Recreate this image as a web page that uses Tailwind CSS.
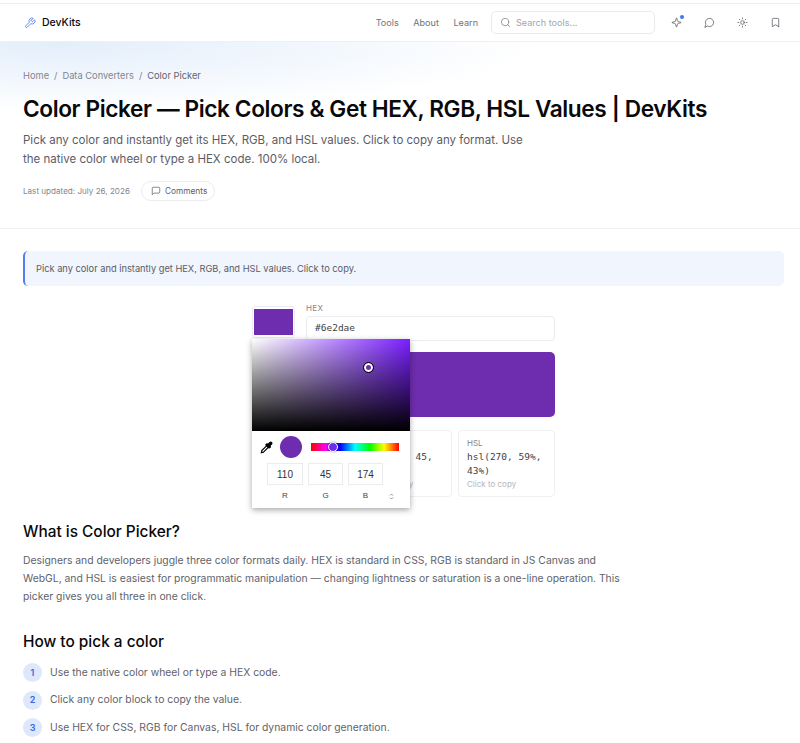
<!doctype html>
<html lang="en">
  <head>
    <meta charset="UTF-8" />
    <meta name="viewport" content="width=device-width, initial-scale=1.0" />
    <title>Color Picker | DevKits</title>
    <script src="https://cdn.jsdelivr.net/npm/@tailwindcss/browser@4"></script>
  </head>

  <body class="h-[743px] overflow-hidden bg-white font-['Inter',sans-serif] text-[#09090b]">
    <div class="h-[4px] border-b border-[#ececee] bg-white"></div>

    <!-- nav -->
    <header class="flex h-[38px] items-center border-b border-[#f0f0f2] bg-white pl-[24px] pr-[19px]">
      <div class="flex items-center gap-[6px]">
        <svg class="h-[12px] w-[12px] text-[#5b7de8]" viewBox="0 0 24 24" fill="none" stroke="currentColor" stroke-width="1.75" stroke-linecap="round" stroke-linejoin="round"><path d="M14.7 6.3a1 1 0 0 0 0 1.4l1.6 1.6a1 1 0 0 0 1.4 0l3.77-3.77a6 6 0 0 1-7.94 7.94l-6.91 6.91a2.12 2.12 0 0 1-3-3l6.91-6.91a6 6 0 0 1 7.94-7.94l-3.76 3.76z"/></svg>
        <span class="text-[10.5px] font-medium">DevKits</span>
      </div>
      <nav class="ml-auto flex items-center gap-[14.5px] text-[9.1px] text-[#71717a]">
        <span>Tools</span>
        <span>About</span>
        <span>Learn</span>
      </nav>
      <div class="ml-[13px] flex h-[23px] w-[164px] items-center gap-[5px] rounded-[5px] border border-[#ebebee] pl-[8px] text-[9.1px] text-[#a4a4ad]">
        <svg class="h-[11px] w-[11px] text-[#85858e]" viewBox="0 0 24 24" fill="none" stroke="currentColor" stroke-width="1.75" stroke-linecap="round" stroke-linejoin="round"><circle cx="11" cy="11" r="8"/><path d="m21 21-4.3-4.3"/></svg>
        <span>Search tools...</span>
      </div>
      <div class="ml-[16px] flex items-center gap-[22px] text-[#63636c]">
        <div class="relative">
          <svg class="h-[11px] w-[11px]" viewBox="0 0 24 24" fill="none" stroke="currentColor" stroke-width="1.75" stroke-linecap="round" stroke-linejoin="round"><path d="M9.94 15.5A2 2 0 0 0 8.5 14.06l-6.14-1.58a.5.5 0 0 1 0-.96L8.5 9.94A2 2 0 0 0 9.94 8.5l1.58-6.14a.5.5 0 0 1 .96 0L14.06 8.5A2 2 0 0 0 15.5 9.94l6.14 1.58a.5.5 0 0 1 0 .96L15.5 14.06a2 2 0 0 0-1.44 1.44l-1.58 6.14a.5.5 0 0 1-.96 0z"/></svg>
          <span class="absolute right-[-2px] top-[-2px] h-[4px] w-[4px] rounded-full bg-[#3b78f2]"></span>
        </div>
        <svg class="h-[11px] w-[11px]" viewBox="0 0 24 24" fill="none" stroke="currentColor" stroke-width="1.75" stroke-linecap="round" stroke-linejoin="round"><path d="M7.9 20A9 9 0 1 0 4 16.1L2 22Z"/></svg>
        <svg class="h-[11px] w-[11px]" viewBox="0 0 24 24" fill="none" stroke="currentColor" stroke-width="1.75" stroke-linecap="round" stroke-linejoin="round"><circle cx="12" cy="12" r="4"/><path d="M12 2v2M12 20v2M4.93 4.93l1.41 1.41M17.66 17.66l1.41 1.41M2 12h2M20 12h2M6.34 17.66l-1.41 1.41M19.07 4.93l-1.41 1.41"/></svg>
        <svg class="h-[11px] w-[11px]" viewBox="0 0 24 24" fill="none" stroke="currentColor" stroke-width="1.75" stroke-linecap="round" stroke-linejoin="round"><path d="m19 21-7-4-7 4V5a2 2 0 0 1 2-2h10a2 2 0 0 1 2 2v16z"/></svg>
      </div>
    </header>

    <!-- hero -->
    <section class="h-[187px] border-b border-[#f0f0f2] bg-[radial-gradient(ellipse_480px_70px_at_60px_0px,#e3eefb,#ffffff)] px-[23px] pt-[28px]">
      <div class="flex items-center gap-[5px] text-[9.3px] leading-[12px] text-[#85858e]">
        <span>Home</span><span>/</span><span>Data Converters</span><span>/</span><span class="text-[#63636c]">Color Picker</span>
      </div>
      <h1 class="mt-[12px] text-[22.67px] font-semibold leading-[30px] tracking-[-0.4px]">Color Picker — Pick Colors &amp; Get HEX, RGB, HSL Values | DevKits</h1>
      <p class="mt-[7px] w-[520px] text-[11.5px] leading-[18.5px] text-[#5c5c66]">Pick any color and instantly get its HEX, RGB, and HSL values. Click to copy any format. Use the native color wheel or type a HEX code. 100% local.</p>
      <div class="mt-[13px] flex items-center gap-[11px]">
        <span class="text-[8.1px] text-[#85858e]">Last updated: July 26, 2026</span>
        <span class="flex h-[20px] w-[74px] items-center gap-[4px] rounded-full border border-[#ececef] pl-[9px] text-[8.3px] text-[#5c5c66]">
          <svg class="h-[10px] w-[10px]" viewBox="0 0 24 24" fill="none" stroke="currentColor" stroke-width="1.75" stroke-linecap="round" stroke-linejoin="round"><path d="M21 15a2 2 0 0 1-2 2H7l-4 4V5a2 2 0 0 1 2-2h14a2 2 0 0 1 2 2z"/></svg>
          Comments
        </span>
      </div>
    </section>

    <main class="pl-[23px] pr-[16px] pt-[22px]">
      <div class="flex h-[35px] items-center rounded-[5px] border-l-2 border-[#4f7ff0] bg-[#f0f5fe] pl-[11px] text-[9.28px] text-[#5c5c66]">Pick any color and instantly get HEX, RGB, and HSL values. Click to copy.</div>

      <!-- tool -->
      <div class="relative mx-auto mt-[17px] h-[199px] w-[303px]">
        <div class="flex gap-[11px]">
          <div class="mt-[3px] h-[32px] w-[43px] rounded-[3px] border border-[#ececef] px-[1px] py-[2px]">
            <div class="h-full w-full bg-[#6e2dae]"></div>
          </div>
          <div class="flex-1">
            <div class="text-[8px] leading-[10px] tracking-[0.4px] text-[#85858e]">HEX</div>
            <div class="mt-[3px] flex h-[25px] items-center rounded-[4px] border border-[#ececef] pl-[8px] font-['DejaVu_Sans_Mono',monospace] text-[9.5px] text-[#3f3f46]">#6e2dae</div>
          </div>
        </div>
        <div class="mt-[11px] h-[65px] rounded-[5px] bg-[#6e2dae]"></div>
        <div class="mt-[13px] grid grid-cols-3 gap-[6px]">
          <div class="h-[67px] rounded-[4px] border border-[#f0f0f2]"></div>
          <div class="h-[67px] rounded-[4px] border border-[#f0f0f2] px-[8px] pt-[6px]">
            <div class="text-[8px] leading-[12px] text-[#85858e]">RGB</div>
            <div class="mt-[1px] font-['DejaVu_Sans_Mono',monospace] text-[9.5px] leading-[14px] text-[#3f3f46]">rgb(110, 45, 174)</div>
            <div class="text-[8px] leading-[12px] text-[#b4b4bb]">Click to copy</div>
          </div>
          <div class="h-[67px] rounded-[4px] border border-[#f0f0f2] px-[8px] pt-[6px]">
            <div class="text-[8px] leading-[12px] text-[#85858e]">HSL</div>
            <div class="mt-[1px] font-['DejaVu_Sans_Mono',monospace] text-[9.5px] leading-[14px] text-[#3f3f46]">hsl(270, 59%, 43%)</div>
            <div class="text-[8px] leading-[12px] text-[#b4b4bb]">Click to copy</div>
          </div>
        </div>

        <!-- color popup -->
        <div class="absolute left-0 top-[36px] h-[169px] w-[158px] bg-white font-['Liberation_Sans',sans-serif] shadow-[0_2px_6px_rgba(0,0,0,0.35)]">
          <div class="relative h-[92px] bg-[linear-gradient(to_top,#000,transparent),linear-gradient(to_right,#fff,#7a1fff)]">
            <span class="absolute left-[112px] top-[24px] h-[9px] w-[9px] rounded-full border-2 border-white bg-[#6e2dae] outline outline-1 outline-black"></span>
          </div>
          <div class="flex h-[32px] items-center pl-[8px]">
            <svg class="h-[13px] w-[13px] text-black" viewBox="0 0 24 24" fill="none" stroke="currentColor" stroke-width="2" stroke-linecap="round" stroke-linejoin="round"><path d="m2 22 1-1h3l9-9"/><path d="M3 21v-3l9-9"/><path d="m15 6 3.4-3.4a2.1 2.1 0 1 1 3 3L18 9l.4.4a2.1 2.1 0 1 1-3 3l-3.8-3.8a2.1 2.1 0 1 1 3-3l.4.4Z" fill="currentColor"/></svg>
            <span class="ml-[7px] h-[22px] w-[22px] rounded-full bg-[#6e2dae]"></span>
            <div class="relative ml-[9px] h-[8px] w-[88px] bg-[linear-gradient(to_right,#f00,#f0f_17%,#00f_33%,#0ff_50%,#0f0_67%,#ff0_83%,#f00)]">
              <span class="absolute left-[17px] top-[-1px] h-[10px] w-[10px] rounded-full border border-white bg-[#6a2cf0] shadow-[0_0_2px_rgba(0,0,0,0.5)]"></span>
            </div>
          </div>
          <div class="ml-[15px] flex gap-[5px] text-center text-[10px] text-[#333]">
            <div class="flex h-[22px] w-[36px] items-center justify-center border border-[#ececec]">110</div>
            <div class="flex h-[22px] w-[35px] items-center justify-center border border-[#ececec]">45</div>
            <div class="flex h-[22px] w-[35px] items-center justify-center border border-[#ececec]">174</div>
          </div>
          <div class="ml-[15px] mt-[5px] flex items-center gap-[5px] text-center text-[8px] leading-[12px] text-[#444]">
            <span class="w-[36px]">R</span>
            <span class="w-[35px]">G</span>
            <span class="w-[35px]">B</span>
            <svg class="ml-[1px] h-[7px] w-[5px] text-[#777]" viewBox="0 0 5 7" fill="none" stroke="currentColor" stroke-width="0.8"><path d="M1 2.5 2.5 1 4 2.5M1 4.5 2.5 6 4 4.5"/></svg>
          </div>
        </div>
      </div>

      <!-- article -->
      <h2 class="mt-[18px] text-[15.4px] font-medium leading-[24px]">What is Color Picker?</h2>
      <p class="mt-[7px] w-[600px] text-[10.36px] leading-[18px] text-[#62626b]">Designers and developers juggle three color formats daily. HEX is standard in CSS, RGB is standard in JS Canvas and WebGL, and HSL is easiest for programmatic manipulation — changing lightness or saturation is a one-line operation. This picker gives you all three in one click.</p>
      <h2 class="mt-[25px] text-[15.4px] font-medium leading-[24px]">How to pick a color</h2>
      <ol class="mt-[9px] flex flex-col gap-[8.5px] text-[10.36px] text-[#62626b]">
        <li class="flex h-[19px] items-center gap-[8px]"><span class="flex h-[19px] w-[19px] items-center justify-center rounded-full bg-[#dde8fc] text-[9px] font-semibold text-[#3f63d6]">1</span>Use the native color wheel or type a HEX code.</li>
        <li class="flex h-[19px] items-center gap-[8px]"><span class="flex h-[19px] w-[19px] items-center justify-center rounded-full bg-[#dde8fc] text-[9px] font-semibold text-[#3f63d6]">2</span>Click any color block to copy the value.</li>
        <li class="flex h-[19px] items-center gap-[8px]"><span class="flex h-[19px] w-[19px] items-center justify-center rounded-full bg-[#dde8fc] text-[9px] font-semibold text-[#3f63d6]">3</span>Use HEX for CSS, RGB for Canvas, HSL for dynamic color generation.</li>
      </ol>
    </main>
  </body>
</html>
